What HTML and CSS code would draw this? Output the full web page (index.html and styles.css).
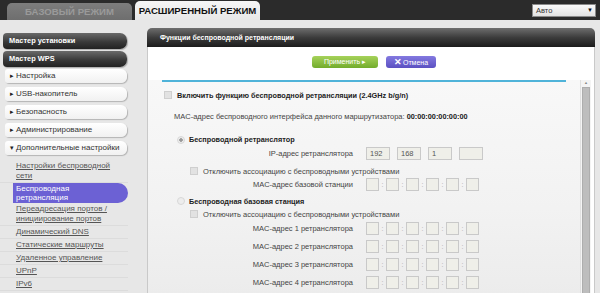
FILE: index.html
```html
<!DOCTYPE html>
<html lang="ru">
<head>
<meta charset="utf-8">
<title>Функции беспроводной ретрансляции</title>
<link rel="stylesheet" href="styles.css">
</head>
<body>
<div class="topbar">
  <div class="tab tab-basic">БАЗОВЫЙ РЕЖИМ</div>
  <div class="tab tab-adv">РАСШИРЕННЫЙ РЕЖИМ</div>
  <div class="lang-select"><span>Авто</span><span class="arrow">▼</span></div>
</div>
<div class="layout">
  <nav class="sidebar">
    <div class="dark-btn">Мастер установки</div>
    <div class="dark-btn">Мастер WPS</div>
    <div class="menu-btn"><span class="tri">▸</span>Настройка</div>
    <div class="menu-btn"><span class="tri">▸</span>USB-накопитель</div>
    <div class="menu-btn"><span class="tri">▸</span>Безопасность</div>
    <div class="menu-btn"><span class="tri">▸</span>Администрирование</div>
    <div class="menu-btn"><span class="tri">▾</span>Дополнительные настройки</div>
    <ul class="sublinks">
      <li><a>Настройки беспроводной<br>сети</a></li>
      <li class="active"><a>Беспроводная<br>ретрансляция</a></li>
      <li><a>Переадресация портов /<br>инициирование портов</a></li>
      <li><a>Динамический DNS</a></li>
      <li><a>Статические маршруты</a></li>
      <li><a>Удаленное управление</a></li>
      <li><a>UPnP</a></li>
      <li><a>IPv6</a></li>
      <li><a>Счетчик трафика</a></li>
    </ul>
  </nav>
  <main class="panel">
    <div class="panel-head">Функции беспроводной ретрансляции</div>
    <div class="panel-body">
      <div class="actions">
        <span class="btn btn-apply">Применить ▸</span>
        <span class="btn btn-cancel"><b>✕</b>Отмена</span>
      </div>
      <div class="scrollarea">
        <div class="content">
          <div class="rule"></div>
          <div class="row r-enable"><span class="cb"></span><b>Включить функцию беспроводной ретрансляции (2.4GHz b/g/n)</b></div>
          <div class="row r-mac"><span>MAC-адрес беспроводного интерфейса данного маршрутизатора:&nbsp;<b>00:00:00:00:00:00</b></span></div>
          <div class="row r-radio1"><span class="radio on"></span><b>Беспроводной ретранслятор</b></div>
          <div class="row field r-ip">
            <span class="label">IP-адрес ретранслятора</span>
            <span class="inp ip">192</span><span class="inp ip">168</span><span class="inp ip">1</span><span class="inp ip"></span>
          </div>
          <div class="row r-cb2"><span class="cb"></span>Отключить ассоциацию с беспроводными устройствами</div>
          <div class="row field r-macbase">
            <span class="label">MAC-адрес базовой станции</span>
            <span class="inp mac"></span><i>:</i><span class="inp mac"></span><i>:</i><span class="inp mac"></span><i>:</i><span class="inp mac"></span><i>:</i><span class="inp mac"></span><i>:</i><span class="inp mac"></span>
          </div>
          <div class="row r-radio2"><span class="radio"></span><b>Беспроводная базовая станция</b></div>
          <div class="row r-cb3"><span class="cb"></span>Отключить ассоциацию с беспроводными устройствами</div>
          <div class="row field r-m1">
            <span class="label">MAC-адрес 1 ретранслятора</span>
            <span class="inp mac"></span><i>:</i><span class="inp mac"></span><i>:</i><span class="inp mac"></span><i>:</i><span class="inp mac"></span><i>:</i><span class="inp mac"></span><i>:</i><span class="inp mac"></span>
          </div>
          <div class="row field r-mn">
            <span class="label">MAC-адрес 2 ретранслятора</span>
            <span class="inp mac"></span><i>:</i><span class="inp mac"></span><i>:</i><span class="inp mac"></span><i>:</i><span class="inp mac"></span><i>:</i><span class="inp mac"></span><i>:</i><span class="inp mac"></span>
          </div>
          <div class="row field r-mn">
            <span class="label">MAC-адрес 3 ретранслятора</span>
            <span class="inp mac"></span><i>:</i><span class="inp mac"></span><i>:</i><span class="inp mac"></span><i>:</i><span class="inp mac"></span><i>:</i><span class="inp mac"></span><i>:</i><span class="inp mac"></span>
          </div>
          <div class="row field r-mn">
            <span class="label">MAC-адрес 4 ретранслятора</span>
            <span class="inp mac"></span><i>:</i><span class="inp mac"></span><i>:</i><span class="inp mac"></span><i>:</i><span class="inp mac"></span><i>:</i><span class="inp mac"></span><i>:</i><span class="inp mac"></span>
          </div>
        </div>
        <div class="scrollbar"><span class="sb-up">▲</span><span class="sb-thumb"></span></div>
      </div>
    </div>
  </main>
</div>
</body>
</html>
```
FILE: styles.css
```css
html, body {
  margin: 0;
  padding: 0;
}
body {
  width: 600px;
  height: 293px;
  overflow: hidden;
  background: #e7e7e7;
  font-family: "Liberation Sans", Arial, sans-serif;
  color: #333;
}

/* top bar */
.topbar {
  height: 20px;
  background: #2b2b2b;
  display: flex;
  align-items: flex-end;
}
.tab {
  height: 17px;
  line-height: 17px;
  text-align: center;
  font-size: 9.6px;
  font-weight: bold;
  border-radius: 5px 5px 0 0;
}
.tab-basic {
  margin-left: 7px;
  width: 125px;
  background: linear-gradient(#7d7d7d, #6e6e6e);
  color: #9a9a9a;
}
.tab-adv {
  margin-left: 3px;
  width: 125px;
  height: 19px;
  line-height: 20px;
  background: linear-gradient(#f6f6f6, #e7e7e7);
  color: #111;
}
.lang-select {
  margin-left: auto;
  margin-right: 4px;
  align-self: flex-start;
  margin-top: 4px;
  width: 57px;
  height: 11px;
  border: 1px solid #8a8a8a;
  background: linear-gradient(#fafafa, #e2e2e2);
  font-size: 7.5px;
  line-height: 11px;
  display: flex;
  justify-content: space-between;
  padding: 0 2px 0 3px;
  color: #333;
}
.lang-select .arrow {
  font-size: 6px;
  color: #111;
}

/* layout */
.layout {
  display: flex;
  align-items: flex-start;
}

/* sidebar */
.sidebar {
  width: 128px;
  padding-top: 13px;
  flex: none;
}
.dark-btn {
  margin-left: 3px;
  width: 118px;
  height: 16px;
  line-height: 16px;
  margin-bottom: 2px;
  padding-left: 6px;
  font-size: 7.4px;
  font-weight: bold;
  color: #fff;
  background: linear-gradient(#6a6a6a, #3a3a3a 55%, #222);
  border-radius: 4px 7px 7px 4px;
  box-shadow: 1px 1px 1px rgba(0,0,0,0.25);
}
.dark-btn + .menu-btn {
  margin-top: 2px;
}
.menu-btn {
  margin-left: 5px;
  width: 117px;
  height: 14px;
  line-height: 14px;
  margin-bottom: 4px;
  padding-left: 5px;
  font-size: 8px;
  color: #333;
  background: linear-gradient(#ffffff, #f1f1f1);
  border-radius: 3px 6px 6px 3px;
  box-shadow: 1px 1px 1px rgba(0,0,0,0.22);
}
.tri {
  font-size: 6.5px;
  color: #222;
  margin-right: 2px;
}
.sublinks {
  list-style: none;
  margin: 0;
  padding: 1px 0 0 0;
}
.sublinks li {
  padding: 1px 4px 1px 16px;
  line-height: 10px;
  font-size: 8px;
  border-bottom: 1px solid #dcdcdc;
}
.sublinks a {
  color: #555;
  text-decoration: underline;
}
.sublinks li.active {
  margin-left: 13px;
  padding-left: 3px;
  line-height: 9px;
  background: #6c61d4;
  border-radius: 0 10px 10px 0;
  border-bottom: none;
}
.sublinks li.active a {
  color: #fff;
  text-decoration: none;
}

/* panel */
.panel {
  margin-left: 19px;
  margin-top: 8px;
  width: 448px;
  flex: none;
}
.panel-head {
  height: 19px;
  line-height: 19px;
  padding-left: 13px;
  font-size: 7px;
  font-weight: bold;
  color: #fff;
  background: linear-gradient(#6e6e6e, #3c3c3c 50%, #1c1c1c);
  border-radius: 5px 5px 0 0;
}
.panel-body {
  background: #fff;
  border-left: 1px solid #c9c9c9;
  border-right: 1px solid #c9c9c9;
  height: 250px;
}
.actions {
  display: flex;
  justify-content: center;
  gap: 8px;
  padding-top: 9px;
  height: 24px;
}
.btn {
  height: 12px;
  line-height: 12px;
  font-size: 7px;
  color: #fff;
  text-align: center;
  border-radius: 3px;
}
.btn-apply {
  width: 66px;
  margin-left: 6px;
  background: linear-gradient(#a6d25a, #72ac2c);
}
.btn-cancel {
  width: 50px;
  background: linear-gradient(#8379e0, #5b50c2);
}
.btn-cancel b {
  font-size: 9px;
  margin-right: 1px;
}

.scrollarea {
  display: flex;
  height: 214px;
}
.content {
  flex: 1;
  background: linear-gradient(#f8f8f8, #f2f2f2 60%, #ececec);
}
.rule {
  height: 2px;
  margin: 0 14px 0 14px;
  background: #4fb3d9;
}
.row {
  display: flex;
  align-items: center;
  font-size: 7.5px;
  color: #444;
  white-space: nowrap;
}
.row b {
  color: #222;
  font-size: 7.3px;
}
.cb {
  width: 6px;
  height: 6px;
  border: 1px solid #cfcfcf;
  background: #e2e2e2;
  margin-right: 5px;
  flex: none;
}
.radio {
  width: 6px;
  height: 6px;
  border-radius: 50%;
  border: 1px solid #d8d8d8;
  background: #ededed;
  margin-right: 4px;
  flex: none;
}
.radio.on {
  background: radial-gradient(circle, #9a9a9a 0 1.5px, #ededed 2px);
}
.r-enable {
  height: 26px;
  padding-left: 16px;
}
.r-mac {
  height: 16px;
  padding-left: 26px;
}
.r-mac b {
  font-size: 7.3px;
}
.r-radio1 {
  margin-top: 8px;
  height: 15px;
  padding-left: 29px;
}
.field .label {
  width: 205px;
  text-align: right;
  margin-right: 13px;
  flex: none;
}
.r-ip {
  height: 13px;
}
.inp {
  height: 11px;
  border: 1px solid #c9c9c9;
  background: #efefe9;
  flex: none;
  font-size: 7.5px;
  line-height: 11px;
  padding-left: 3px;
  box-sizing: content-box;
  color: #555;
}
.inp.ip {
  width: 19px;
  margin-right: 7px;
}
.inp.mac {
  width: 11px;
  padding-left: 0;
}
.field i {
  width: 7px;
  text-align: center;
  font-style: normal;
  font-size: 7px;
  color: #aaa;
}
.r-cb2 {
  margin-top: 4px;
  height: 14px;
  padding-left: 42px;
}
.r-macbase {
  height: 13px;
}
.r-radio2 {
  margin-top: 3px;
  height: 14px;
  padding-left: 29px;
}
.r-cb3 {
  height: 12px;
  padding-left: 42px;
}
.r-m1 {
  margin-top: 2px;
  height: 13px;
}
.r-mn {
  margin-top: 5px;
  height: 13px;
}

.scrollbar {
  width: 10px;
  margin-right: 3px;
  background: #f4f4f4;
  border-left: 1px solid #e0e0e0;
  display: flex;
  flex-direction: column;
  align-items: center;
}
.sb-up {
  font-size: 4px;
  color: #888;
  height: 6px;
  line-height: 6px;
}
.sb-thumb {
  margin-top: 1px;
  width: 8px;
  flex: 1;
  background: #bdbdbd;
  border: 1px solid #adadad;
  box-sizing: border-box;
}
```
